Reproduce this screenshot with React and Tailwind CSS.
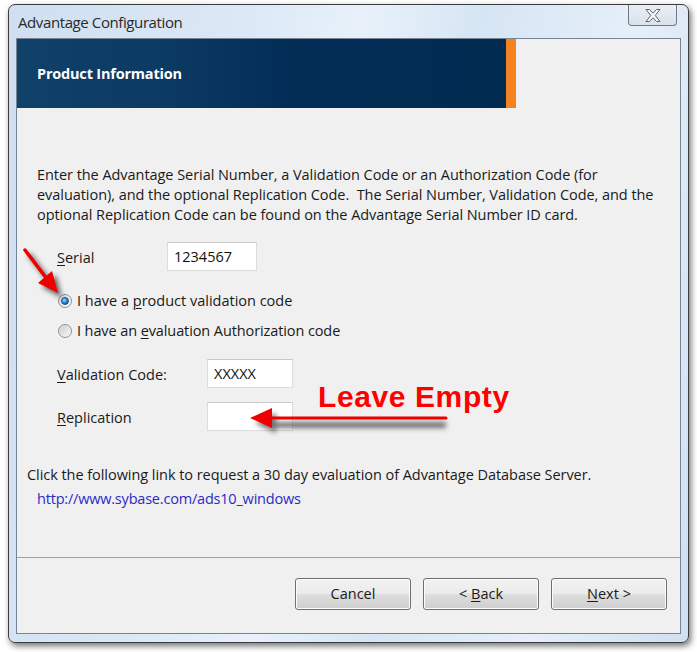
import React from "react";

const font = { fontFamily: '"Open Sans", "Noto Sans", sans-serif' };

function U({ children }) {
  return <span className="underline underline-offset-[2px] decoration-[1px]">{children}</span>;
}

function Radio({ checked }) {
  return (
    <div className="w-[14px] h-[14px] rounded-full border border-[#8e8f8f] bg-[linear-gradient(135deg,#d6d6d6,#fbfbfb)] flex items-center justify-center shrink-0">
      {checked ? (
        <div className="w-[8px] h-[8px] rounded-full bg-[radial-gradient(circle_at_35%_35%,#9fe0ff_0%,#2f8fd8_45%,#0b3d78_100%)] border border-[#1c4e88]" />
      ) : (
        <div className="w-[10px] h-[10px] rounded-full bg-[linear-gradient(135deg,#cfcfcf,#f4f4f4)]" />
      )}
    </div>
  );
}

function Btn({ children }) {
  return (
    <div className="w-[116px] h-[32px] rounded-[3px] border border-[#707070] bg-[linear-gradient(to_bottom,#f2f2f2_0%,#ebebeb_48%,#dddddd_52%,#cfcfcf_100%)] shadow-[inset_0_0_0_1px_#fcfcfc] flex items-center justify-center text-[14.5px] text-[#1a1a1a]">
      <span className="whitespace-pre">{children}</span>
    </div>
  );
}

function Input({ w, children }) {
  return (
    <div
      className={`${w} h-[29px] bg-white border border-[#dcdcdc] border-t-[#c9c9c9] flex items-center pl-[6px] text-[14.5px] text-[#111]`}
    >
      {children}
    </div>
  );
}

export default function App() {
  return (
    <div className="w-[697px] h-[652px] bg-white relative overflow-hidden" style={font}>
      <div className="ml-[8px] mt-[4px] w-[681px] h-[639px] rounded-[7px] border border-[#3c3c3c] bg-[linear-gradient(100deg,#cfdff0_0%,#dbe8f6_30%,#e8f1fa_45%,#d6e5f4_60%,#e6eff9_80%,#cfe0f1_100%)] shadow-[2px_3px_6px_rgba(0,0,0,0.55)] flex flex-col">
        {/* title bar */}
        <div className="h-[33px] flex items-start relative">
          <div className="pl-[9px] pt-[7px] text-[15px] text-[#2a2a2a] leading-[20px] tracking-[-0.4px]">Advantage Configuration</div>
          <div className="absolute right-[11px] top-0 w-[49px] h-[21px] rounded-b-[4px] border border-t-0 border-[#6e7a88] bg-[linear-gradient(to_bottom,#e9eef4,#d9e2ec)] flex items-center justify-center">
            <svg width="18" height="15" viewBox="0 0 18 15">
              <path
                d="M2 1.5 L5.5 1.5 L9 5.2 L12.5 1.5 L16 1.5 L11.2 7.5 L16 13.5 L12.5 13.5 L9 9.8 L5.5 13.5 L2 13.5 L6.8 7.5 Z"
                fill="#f7f7f7"
                stroke="#5f646b"
                strokeWidth="1"
                strokeLinejoin="round"
              />
            </svg>
          </div>
        </div>

        {/* client */}
        <div className="mx-[7px] mb-[8px] flex-1 border border-[#76849a] bg-[#f0f0f0] flex flex-col">
          {/* header */}
          <div className="h-[69px] flex">
            <div className="w-[489px] h-full bg-[linear-gradient(90deg,#104169_0%,#0b3a63_30%,#032d56_55%,#022b52_100%)] flex items-center pl-[20px]">
              <span className="text-white font-bold text-[14.5px] tracking-[-0.2px]">Product Information</span>
            </div>
            <div className="w-[10px] h-full bg-[#f4831f]" />
          </div>

          {/* paragraph */}
          <div className="mt-[57px] pl-[20px] pr-[10px] text-[14.5px] leading-[20px] text-[#1a1a1a] tracking-[-0.05px] whitespace-nowrap">
            Enter the Advantage Serial Number, a Validation Code or an Authorization Code (for
            <br />
            evaluation), and the optional Replication Code.&nbsp; The Serial Number, Validation Code, and the
            <br />
            optional Replication Code can be found on the Advantage Serial Number ID card.
          </div>

          {/* serial */}
          <div className="mt-[17px] pl-[40px] flex items-center text-[14.5px] text-[#1a1a1a]">
            <div className="w-[110px] pt-[3px]">
              <U>S</U>erial
            </div>
            <Input w="w-[90px]">1234567</Input>
          </div>

          {/* radios */}
          <div className="mt-[20px] pl-[41px] h-[20px] flex items-center gap-[5px] text-[14.5px] text-[#1a1a1a]">
            <Radio checked />
            <span>
              I have a <U>p</U>roduct validation code
            </span>
          </div>
          <div className="mt-[10px] pl-[41px] h-[20px] flex items-center gap-[5px] text-[14.5px] text-[#1a1a1a] tracking-[-0.1px]">
            <Radio />
            <span>
              I have an <U>e</U>valuation Authorization code
            </span>
          </div>

          {/* validation */}
          <div className="mt-[18px] pl-[40px] flex items-center text-[14.5px] text-[#1a1a1a]">
            <div className="w-[150px] pt-[3px]">
              <U>V</U>alidation Code:
            </div>
            <Input w="w-[86px]">XXXXX</Input>
          </div>
          <div className="mt-[14px] pl-[40px] flex items-center text-[14.5px] text-[#1a1a1a]">
            <div className="w-[150px] pt-[3px]">
              <U>R</U>eplication
            </div>
            <Input w="w-[86px]"></Input>
          </div>

          <div className="mt-[34px] pl-[10px] text-[14.5px] leading-[20px] text-[#1a1a1a] tracking-[-0.05px] whitespace-nowrap">
            Click the following link to request a 30 day evaluation of Advantage Database Server.
          </div>
          <div className="mt-[4px] pl-[20px] text-[14.5px] leading-[20px] text-[#2b2bc8] tracking-[-0.2px]">
            http://www.sybase.com/ads10_windows
          </div>

          <div className="mt-[48px] h-[1px] bg-[#a0a0a0]" />

          <div className="mt-[20px] pr-[13px] flex justify-end gap-[12px]">
            <Btn>Cancel</Btn>
            <Btn>
              {"< "}
              <U>B</U>
              {"ack"}
            </Btn>
            <Btn>
              <U>N</U>
              {"ext >"}
            </Btn>
          </div>
        </div>
      </div>

      {/* annotations */}
      <svg className="absolute left-0 top-0 pointer-events-none" width="697" height="652">
        <defs>
          <filter id="sh" x="-50%" y="-50%" width="200%" height="200%">
            <feGaussianBlur stdDeviation="2.5" />
          </filter>
        </defs>
        <g filter="url(#sh)" opacity="0.75">
          <line x1="29" y1="254" x2="50" y2="282" stroke="#333" strokeWidth="4" />
          <polygon points="62,298 42,287 56,275" fill="#333" />
          <line x1="446" y1="425" x2="272" y2="425" stroke="#444" strokeWidth="6" />
          <polygon points="255,423 276,413 276,433" fill="#444" />
        </g>
        <line x1="25" y1="250" x2="47" y2="279" stroke="#ee0000" strokeWidth="3.5" strokeLinecap="round" />
        <polygon points="58,293 38,283 52,271" fill="#ee0000" />
        <line x1="446" y1="418" x2="268" y2="418" stroke="#ee0000" strokeWidth="3" strokeLinecap="round" />
        <polygon points="250,418 272,408 272,428" fill="#ee0000" />
      </svg>
      <div
        className="absolute left-[318px] top-[379px] text-[30px] font-bold text-[#ff0000] leading-[36px] tracking-[0.6px]"
        style={{ fontFamily: '"Liberation Sans", Arial, sans-serif' }}
      >
        Leave Empty
      </div>
    </div>
  );
}
